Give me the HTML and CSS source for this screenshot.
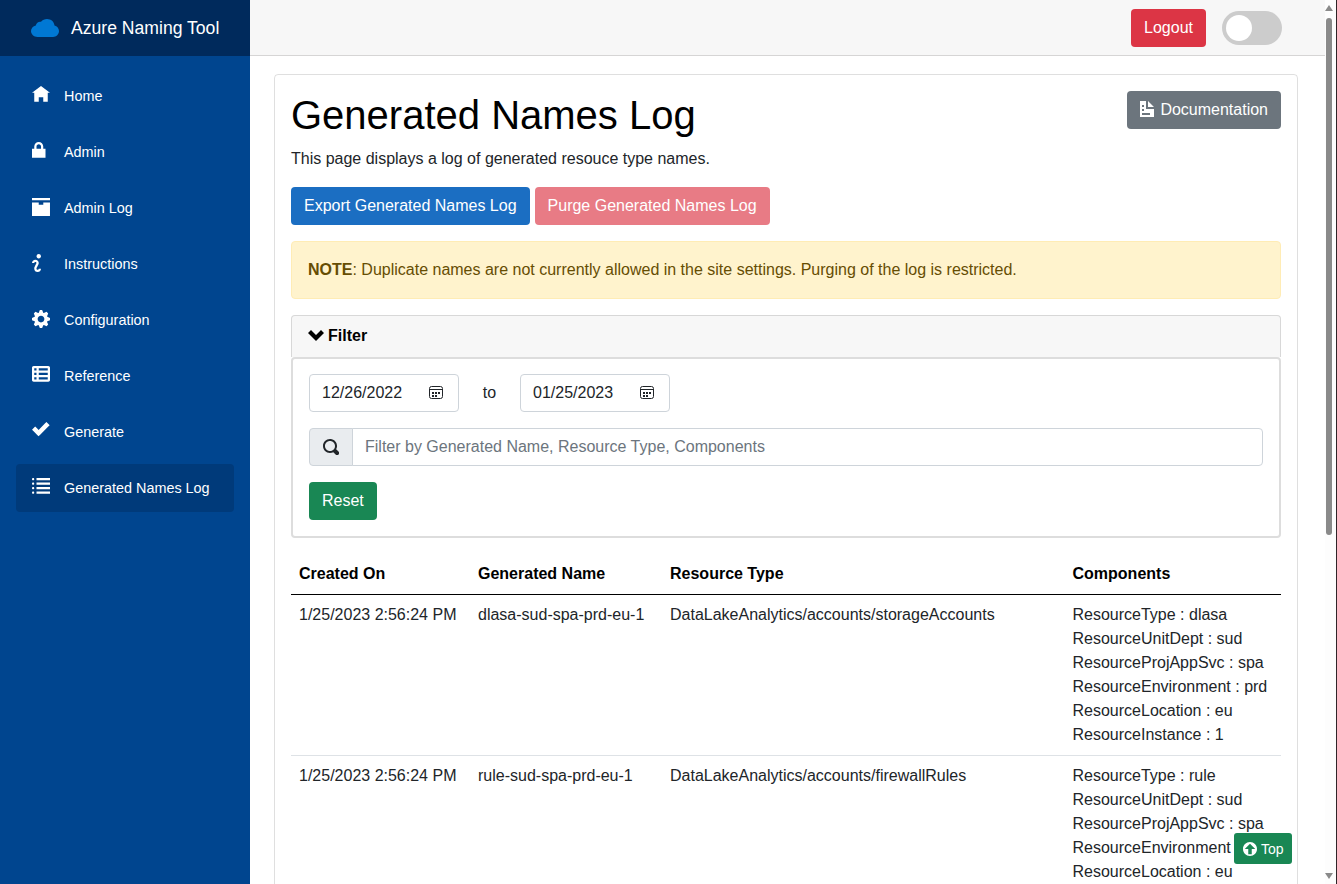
FILE: index.html
```html
<!DOCTYPE html>
<html lang="en">
<head>
  <meta charset="UTF-8" />
  <title>Generated Names Log</title>
  <link rel="stylesheet" href="styles.css">
</head>
<body>
  <div class="page">
    <aside class="sidebar">
      <div class="brand">
        <svg class="brand-cloud" viewBox="0 0 28 18"><path d="M6.500 18C2.900 18 0 15.400 0 12.100c0-2.800 2-5 4.800-5.700C5.400 3.700 7.700 2.300 10 2.800 11.500 1 13.700 0 16 0c4 0 7.200 2.800 7.500 6.500 2.700.7 4.500 2.900 4.500 5.600 0 3.300-2.700 5.900-6 5.900H6.500z"/></svg>
        <span>Azure Naming Tool</span>
      </div>
      <nav class="nav">
        <a class="nav-link" href="#">
          <svg class="oi" viewBox="0 0 8 8"><path d="M4 0l-4 3h1v4h2v-2h2v2h2v-4.030l1 .03-4-3z"/></svg>Home
        </a>
        <a class="nav-link" href="#">
          <svg class="oi" viewBox="0 0 8 8"><path d="M3 0c-1.100 0-2 .9-2 2v1h-1v4h6v-4h-1v-1c0-1.100-.9-2-2-2zm0 1c.56 0 1 .44 1 1v1h-2v-1c0-.56.44-1 1-1z"/></svg>Admin
        </a>
        <a class="nav-link" href="#">
          <svg class="oi" viewBox="0 0 8 8"><path d="M0 0v1h8v-1h-8zm0 2v5.910c0 .05.04.09.09.09h7.810c.05 0 .09-.04.09-.09v-5.910h-2.970v1.030h-2.030v-1.030h-3z"/></svg>Admin Log
        </a>
        <a class="nav-link" href="#">
          <svg class="oi" viewBox="0 0 8 8"><path d="M3 0c-.55 0-1 .45-1 1s.45 1 1 1 1-.45 1-1-.45-1-1-1zm-1.500 2.500c-.83 0-1.500.67-1.500 1.500h1c0-.28.22-.5.5-.5s.5.22.5.5-1 1.640-1 2.500c0 .86.67 1.500 1.500 1.500s1.500-.67 1.500-1.500h-1c0 .28-.22.5-.5.5s-.5-.22-.5-.5c0-.36 1-1.840 1-2.500 0-.81-.67-1.500-1.500-1.500z"/></svg>Instructions
        </a>
        <a class="nav-link" href="#">
          <svg class="oi" viewBox="0 0 8 8"><path d="M3.500 0l-.5 1.190c-.1.03-.19.08-.28.13l-1.190-.5-.72.72.5 1.190c-.05.1-.09.18-.13.28l-1.190.5v1l1.190.5c.04.1.08.18.13.28l-.5 1.190.72.72 1.190-.5c.09.04.18.09.28.13l.5 1.190h1l.5-1.190c.09-.04.19-.08.28-.13l1.190.5.72-.72-.5-1.190c.04-.09.09-.19.13-.28l1.190-.5v-1l-1.190-.5c-.03-.09-.08-.19-.13-.28l.5-1.190-.72-.72-1.190.5c-.09-.04-.19-.09-.28-.13l-.5-1.190h-1zm.5 2.500c.83 0 1.500.67 1.500 1.500s-.67 1.500-1.500 1.500-1.500-.67-1.500-1.500.67-1.500 1.500-1.500z"/></svg>Configuration
        </a>
        <a class="nav-link" href="#">
          <svg class="oi" viewBox="0 0 8 8"><path d="M.75 0c-.41 0-.75.34-.75.75v5.500c0 .41.34.75.75.75h6.500c.41 0 .75-.34.75-.75v-5.500c0-.41-.34-.75-.75-.75h-6.500zm.25 1h1v1h-1v-1zm2 0h4v1h-4v-1zm-2 2h1v1h-1v-1zm2 0h4v1h-4v-1zm-2 2h1v1h-1v-1zm2 0h4v1h-4v-1z"/></svg>Reference
        </a>
        <a class="nav-link" href="#">
          <svg class="oi" viewBox="0 0 8 8"><path d="M6.410 0l-.69.72-2.780 2.780-.81-.78-.72-.72-1.410 1.410.72.72 1.500 1.500.69.72.72-.72 3.500-3.500.72-.72-1.440-1.410z"/></svg>Generate
        </a>
        <a class="nav-link active" href="#">
          <svg class="oi" viewBox="0 0 8 8"><path d="M.5 0c-.28 0-.5.22-.5.5s.22.5.5.5.5-.22.5-.5-.22-.5-.5-.5zm1.500 0v1h6v-1h-6zm-1.500 2c-.28 0-.5.22-.5.5s.22.5.5.5.5-.22.5-.5-.22-.5-.5-.5zm1.500 0v1h6v-1h-6zm-1.500 2c-.28 0-.5.22-.5.5s.22.5.5.5.5-.22.5-.5-.22-.5-.5-.5zm1.500 0v1h6v-1h-6zm-1.500 2c-.28 0-.5.22-.5.5s.22.5.5.5.5-.22.5-.5-.22-.5-.5-.5zm1.500 0v1h6v-1h-6z"/></svg>Generated Names Log
        </a>
      </nav>
    </aside>

    <main class="main">
      <div class="top-row">
        <button class="btn btn-danger">Logout</button>
        <span class="switch"><span class="knob"></span></span>
      </div>

      <div class="content">
        <div class="card">
          <div class="title-row">
            <h1>Generated Names Log</h1>
            <button class="btn btn-secondary">
              <svg class="btn-icon" viewBox="0 0 8 8"><path d="M0 0v8h7v-4h-4v-4h-3zm4 0v3h3l-3-3zm-3 2h1v1h-1v-1zm0 2h1v1h-1v-1zm0 2h4v1h-4v-1z"/></svg>Documentation
            </button>
          </div>
          <p class="lead">This page displays a log of generated resouce type names.</p>

          <div class="actions">
            <button class="btn btn-primary">Export Generated Names Log</button>
            <button class="btn btn-danger disabled">Purge Generated Names Log</button>
          </div>

          <div class="alert"><strong>NOTE</strong>: Duplicate names are not currently allowed in the site settings. Purging of the log is restricted.</div>

          <div class="filter-head">
            <svg class="chevron" viewBox="0 0 8 8"><path d="M1.500 1l-1.500 1.500 4 4 4-4-1.500-1.500-2.500 2.500-2.500-2.500z"/></svg>Filter
          </div>
          <div class="filter-body">
            <div class="date-row">
              <div class="field date">
                <input class="date-input" type="date" value="2022-12-26">
                <svg class="cal" viewBox="0 0 14 13"><rect x=".5" y=".5" width="13" height="12" rx="2"/><path d="M1 3.500h12"/><path class="cal-dots" d="M3 6h2v2H3zM6 6h2v2H6zM9 6h2v2H9zM3 9h2v2H3zM6 9h2v2H6z"/></svg>
              </div>
              <span class="to">to</span>
              <div class="field date">
                <input class="date-input" type="date" value="2023-01-25">
                <svg class="cal" viewBox="0 0 14 13"><rect x=".5" y=".5" width="13" height="12" rx="2"/><path d="M1 3.500h12"/><path class="cal-dots" d="M3 6h2v2H3zM6 6h2v2H6zM9 6h2v2H9zM3 9h2v2H3zM6 9h2v2H6z"/></svg>
              </div>
            </div>
            <div class="search">
              <span class="search-addon">
                <svg class="search-icon" viewBox="0 0 8 8"><path d="M3.500 0c-1.930 0-3.500 1.570-3.500 3.500s1.570 3.500 3.500 3.500c.59 0 1.170-.14 1.660-.41a1 1 0 0 0 .13.13l1 1a1.020 1.020 0 1 0 1.440-1.440l-1-1a1 1 0 0 0-.16-.13c.27-.49.44-1.060.44-1.660 0-1.930-1.570-3.500-3.500-3.500zm0 1c1.390 0 2.500 1.110 2.500 2.500 0 .66-.24 1.270-.66 1.720-.01.01-.02.02-.03.03a1 1 0 0 0-.13.13c-.44.4-1.040.63-1.690.63-1.390 0-2.500-1.110-2.500-2.500s1.110-2.500 2.500-2.500z"/></svg>
              </span>
              <input class="field search-input" type="text" placeholder="Filter by Generated Name, Resource Type, Components">
            </div>
            <button class="btn btn-success">Reset</button>
          </div>

          <table class="log">
            <thead>
              <tr><th>Created On</th><th>Generated Name</th><th>Resource Type</th><th>Components</th></tr>
            </thead>
            <tbody>
              <tr>
                <td>1/25/2023 2:56:24 PM</td>
                <td>dlasa-sud-spa-prd-eu-1</td>
                <td>DataLakeAnalytics/accounts/storageAccounts</td>
                <td>ResourceType : dlasa<br>ResourceUnitDept : sud<br>ResourceProjAppSvc : spa<br>ResourceEnvironment : prd<br>ResourceLocation : eu<br>ResourceInstance : 1</td>
              </tr>
              <tr>
                <td>1/25/2023 2:56:24 PM</td>
                <td>rule-sud-spa-prd-eu-1</td>
                <td>DataLakeAnalytics/accounts/firewallRules</td>
                <td>ResourceType : rule<br>ResourceUnitDept : sud<br>ResourceProjAppSvc : spa<br>ResourceEnvironment : prd<br>ResourceLocation : eu<br>ResourceInstance : 1</td>
              </tr>
            </tbody>
          </table>
        </div>
      </div>
    </main>

    <div class="scrollbar">
      <span class="arrow arrow-up"></span>
      <span class="thumb"></span>
      <span class="arrow arrow-down"></span>
    </div>
  </div>

  <a class="to-top" href="#">
    <svg class="to-top-icon" viewBox="0 0 8 8"><path d="M4 0c-2.210 0-4 1.790-4 4s1.790 4 4 4 4-1.790 4-4-1.790-4-4-4zm0 1l3 3h-2v3h-2v-3h-2l3-3z"/></svg>Top
  </a>
</body>
</html>
```

FILE: styles.css
```css
* {
  box-sizing: border-box;
}

html, body {
  height: 100%;
}

body {
  margin: 0;
  overflow: hidden;
  font-family: "Liberation Sans", Arial, sans-serif;
  font-size: 16px;
  line-height: 24px;
  color: #212529;
  background: #fff;
}

.page {
  display: flex;
  height: 100%;
}

/* sidebar */
.sidebar {
  flex: 0 0 250px;
  background: #00458f;
}

.brand {
  display: flex;
  align-items: center;
  height: 56px;
  padding-left: 31px;
  gap: 12px;
  background: #002a5c;
  color: #fff;
  font-size: 17.6px;
}

.brand-cloud {
  width: 28px;
  height: 18px;
  fill: #0078d4;
}

.nav {
  display: flex;
  flex-direction: column;
  gap: 8px;
  padding: 16px 16px 0;
}

.nav-link {
  display: flex;
  align-items: center;
  height: 48px;
  padding-left: 16px;
  border-radius: 4px;
  color: #fff;
  font-size: 14.4px;
  text-decoration: none;
}

.nav-link.active {
  background: #003a7a;
}

.oi {
  flex: none;
  width: 18px;
  height: 18px;
  margin: -3px 14px 0 0;
  fill: #fff;
}

/* main column */
.main {
  flex: 1;
  min-width: 0;
  overflow: hidden;
}

.top-row {
  display: flex;
  align-items: center;
  justify-content: flex-end;
  gap: 16px;
  height: 56px;
  padding-right: 43px;
  background: #f7f7f7;
  border-bottom: 1px solid #d6d5d5;
}

.switch {
  display: block;
  width: 60px;
  height: 34px;
  padding: 4px;
  border-radius: 17px;
  background: #ccc;
}

.knob {
  display: block;
  width: 26px;
  height: 26px;
  border-radius: 50%;
  background: #fff;
}

.content {
  padding: 18px 27px 16px 24px;
}

.card {
  padding: 16px;
  border: 1px solid rgba(0, 0, 0, .125);
  border-radius: 4px;
}

.title-row {
  display: flex;
  justify-content: space-between;
  align-items: flex-start;
}

h1 {
  margin: 0;
  font-size: 40px;
  font-weight: 400;
  line-height: 48px;
  color: #000;
}

.lead {
  margin: 8px 0 16px;
}

/* buttons */
.btn {
  display: inline-block;
  height: 38px;
  padding: 6px 12px;
  border: 1px solid transparent;
  border-radius: 4px;
  font: inherit;
  color: #fff;
}

.btn-danger {
  background: #dc3545;
}

.btn-danger.disabled {
  opacity: .65;
}

.btn-primary {
  background: #1b6ec2;
}

.btn-secondary {
  background: #6c757d;
}

.btn-success {
  background: #198754;
}

.btn-icon {
  width: 16px;
  height: 16px;
  margin-right: 4px;
  vertical-align: -2px;
  fill: #fff;
}

.actions {
  display: flex;
  gap: 5px;
  margin-bottom: 16px;
}

.alert {
  padding: 16px;
  margin-bottom: 16px;
  height: 58px;
  border: 1px solid #ffecb5;
  border-radius: 4px;
  background: #fff3cd;
  color: #664d03;
}

/* filter */
.filter-head {
  display: flex;
  align-items: center;
  height: 42px;
  padding: 0 0 2px 16px;
  border: 1px solid rgba(0, 0, 0, .125);
  border-bottom: 0;
  border-radius: 4px 4px 0 0;
  background: #f7f7f7;
  font-weight: 700;
  color: #000;
}

.chevron {
  width: 16px;
  height: 16px;
  margin-right: 4px;
  fill: #000;
}

.filter-body {
  height: 181px;
  padding: 15px 16px 0;
  border: 2px solid #ddd;
  border-radius: 4px;
}

.field {
  height: 38px;
  padding: 6px 12px;
  border: 1px solid #ced4da;
  border-radius: 4px;
  background: #fff;
  font: inherit;
  color: #212529;
}

.date {
  display: flex;
  align-items: center;
  width: 150px;
  padding-right: 15px;
}

.date-input {
  flex: 1;
  min-width: 0;
  padding: 0;
  border: 0;
  background: none;
  font: inherit;
  color: inherit;
}

.date-input::-webkit-calendar-picker-indicator {
  display: none;
}

.date-input::-webkit-datetime-edit,
.date-input::-webkit-datetime-edit-fields-wrapper,
.date-input::-webkit-datetime-edit-month-field,
.date-input::-webkit-datetime-edit-day-field,
.date-input::-webkit-datetime-edit-year-field,
.date-input::-webkit-datetime-edit-text {
  padding: 0;
}

.cal {
  flex: none;
  width: 14px;
  height: 13px;
  margin-top: -1px;
  fill: none;
  stroke: #212529;
  stroke-width: 1;
}

.cal-dots {
  fill: #212529;
  stroke: none;
}

.date-row {
  display: flex;
  align-items: center;
  margin-bottom: 16px;
}

.to {
  width: 61px;
  text-align: center;
}

.search {
  display: flex;
  margin-bottom: 16px;
}

.search-addon {
  display: flex;
  align-items: center;
  justify-content: center;
  width: 44px;
  height: 38px;
  border: 1px solid #ced4da;
  border-radius: 4px 0 0 4px;
  background: #e9ecef;
}

.search-icon {
  width: 16px;
  height: 16px;
  fill: #212529;
}

.search-input {
  flex: 1;
  margin-left: -1px;
  border-radius: 0 4px 4px 0;
}

.search-input::placeholder {
  color: #6c757d;
}

/* table */
.log {
  width: 100%;
  margin-top: 16px;
  border-collapse: collapse;
  table-layout: fixed;
}

.log th {
  padding: 8px;
  text-align: left;
  color: #000;
  border-bottom: 1px solid #000;
}

.log th:nth-child(1) { width: 179px; }
.log th:nth-child(2) { width: 192px; }
.log th:nth-child(3) { width: 402.5px; }

.log td {
  padding: 8px;
  vertical-align: top;
  border-bottom: 1px solid #dee2e6;
}

/* scrollbar column, the shot shows it but a headless page draws none */
.scrollbar {
  flex: 0 0 12px;
  display: flex;
  flex-direction: column;
  align-items: flex-start;
  padding: 5px 0;
  background: #fdfdfd;
  border-right: 1px solid #2f2528;
}

.arrow {
  width: 0;
  height: 0;
  border-left: 4px solid transparent;
  border-right: 4px solid transparent;
}

.arrow-up {
  border-bottom: 6px solid #8a8a8a;
}

.arrow-down {
  margin-top: auto;
  border-top: 6px solid #8a8a8a;
}

.thumb {
  width: 6px;
  height: 517px;
  margin: 7px 0 0 1px;
  border-radius: 3px;
  background: #8a8a8a;
}

.to-top {
  position: fixed;
  left: 1234px;
  top: 833px;
  display: flex;
  align-items: center;
  gap: 4px;
  width: 58px;
  height: 31px;
  padding-left: 9px;
  border-radius: 3px;
  background: #198754;
  color: #fff;
  font-size: 14px;
  text-decoration: none;
}

.to-top-icon {
  width: 14px;
  height: 14px;
  fill: #fff;
}
```
